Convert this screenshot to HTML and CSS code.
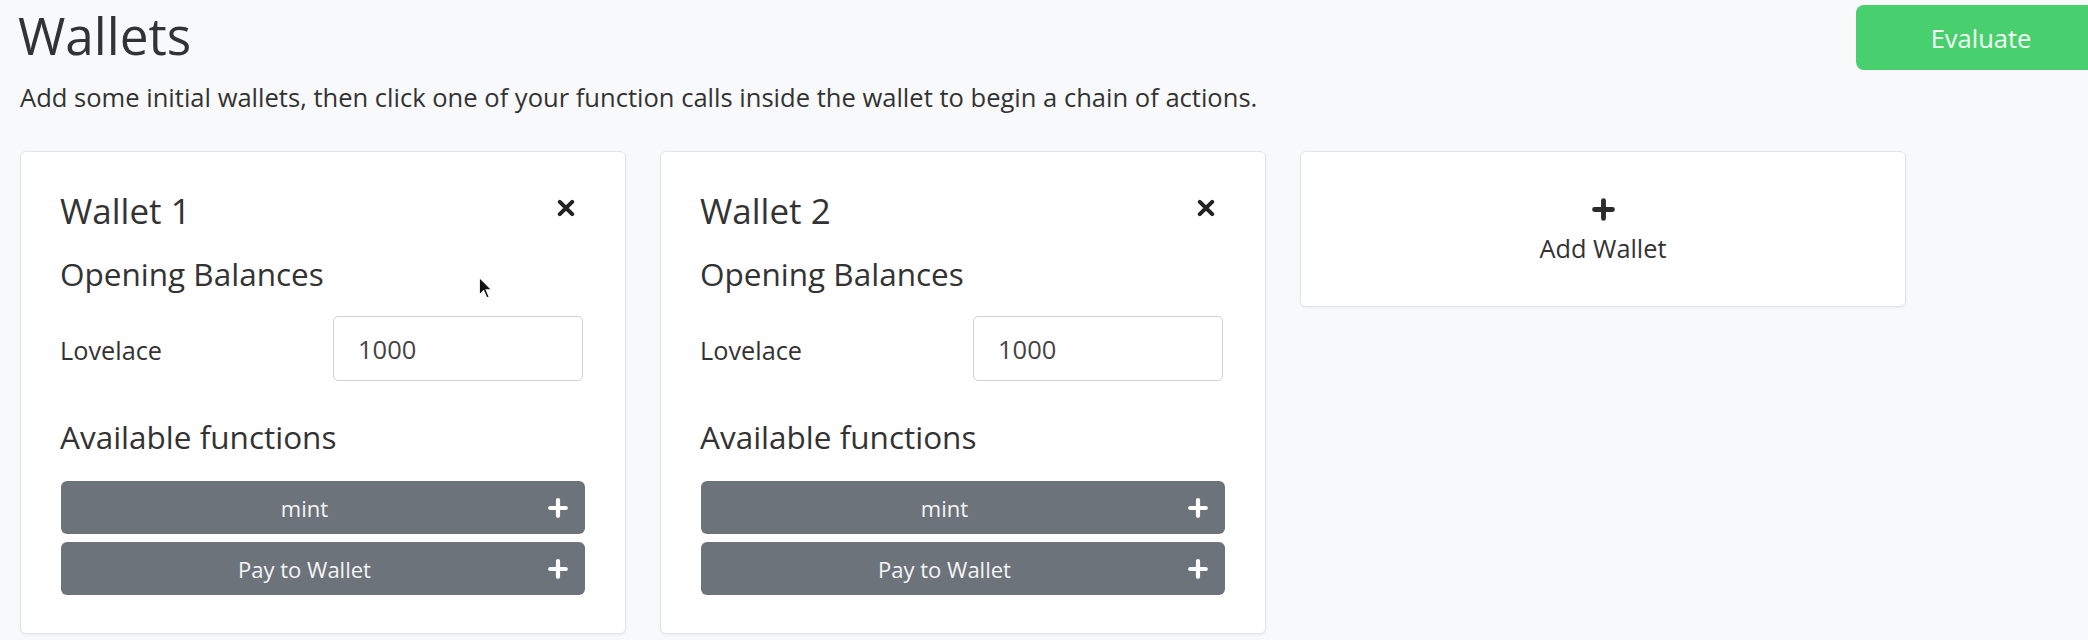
FILE: index.html
```html
<!DOCTYPE html>
<html lang="en">
<head>
<meta charset="utf-8">
<title>Wallets</title>
<link rel="stylesheet" href="styles.css">
</head>
<body>
<div class="page">
  <header class="header">
    <div class="intro">
      <h1 class="title">Wallets</h1>
      <p class="subtitle">Add some initial wallets, then click one of your function calls inside the wallet to begin a chain of actions.</p>
    </div>
    <button class="evaluate">Evaluate</button>
  </header>

  <div class="wallets">
    <section class="card wallet">
      <div class="wallet-head">
        <h2 class="wallet-name">Wallet 1</h2>
        <svg class="close" viewBox="0 0 16 16" width="18" height="18"><path d="M2.5 2.5 L13.5 13.5 M13.5 2.5 L2.5 13.5" stroke="#222" stroke-width="3.6" stroke-linecap="round"/></svg>
      </div>
      <h3 class="section-title">Opening Balances</h3>
      <div class="balance-row">
        <span class="balance-label">Lovelace</span>
        <input class="balance-input" type="text" value="1000">
      </div>
      <h3 class="section-title functions-title">Available functions</h3>
      <div class="functions">
        <button class="fn-btn"><span class="fn-label">mint</span><svg class="fn-plus" viewBox="0 0 18 18" width="20" height="20"><path d="M9 2 V16 M2 9 H16" stroke="#fff" stroke-width="3.8" stroke-linecap="round"/></svg></button>
        <button class="fn-btn"><span class="fn-label">Pay to Wallet</span><svg class="fn-plus" viewBox="0 0 18 18" width="20" height="20"><path d="M9 2 V16 M2 9 H16" stroke="#fff" stroke-width="3.8" stroke-linecap="round"/></svg></button>
      </div>
    </section>

    <section class="card wallet">
      <div class="wallet-head">
        <h2 class="wallet-name">Wallet 2</h2>
        <svg class="close" viewBox="0 0 16 16" width="18" height="18"><path d="M2.5 2.5 L13.5 13.5 M13.5 2.5 L2.5 13.5" stroke="#222" stroke-width="3.6" stroke-linecap="round"/></svg>
      </div>
      <h3 class="section-title">Opening Balances</h3>
      <div class="balance-row">
        <span class="balance-label">Lovelace</span>
        <input class="balance-input" type="text" value="1000">
      </div>
      <h3 class="section-title functions-title">Available functions</h3>
      <div class="functions">
        <button class="fn-btn"><span class="fn-label">mint</span><svg class="fn-plus" viewBox="0 0 18 18" width="20" height="20"><path d="M9 2 V16 M2 9 H16" stroke="#fff" stroke-width="3.8" stroke-linecap="round"/></svg></button>
        <button class="fn-btn"><span class="fn-label">Pay to Wallet</span><svg class="fn-plus" viewBox="0 0 18 18" width="20" height="20"><path d="M9 2 V16 M2 9 H16" stroke="#fff" stroke-width="3.8" stroke-linecap="round"/></svg></button>
      </div>
    </section>

    <section class="card add-wallet">
      <svg class="add-plus" viewBox="0 0 18 18" width="23" height="23"><path d="M9 2 V16 M2 9 H16" stroke="#2b2b2b" stroke-width="3.8" stroke-linecap="round"/></svg>
      <span class="add-label">Add Wallet</span>
    </section>
  </div>

  <svg class="cursor" viewBox="0 0 12 19" width="15" height="24"><path d="M1 1 L1 15 L4.5 11.8 L7 17.5 L9 16.6 L6.6 11 L11 11 Z" fill="#111" stroke="#fff" stroke-width="1"/></svg>
</div>
</body>
</html>
```

FILE: styles.css
```css
* { box-sizing: border-box; }

html, body {
  margin: 0;
  padding: 0;
  background: #f8f9fa;
  overflow: hidden;
}

body {
  font-family: "Open Sans", "Noto Sans", sans-serif;
  color: #333;
  width: 2088px;
  height: 640px;
}

.page {
  position: relative;
  padding: 0 0 0 20px;
}

.header {
  display: flex;
  justify-content: space-between;
  align-items: flex-start;
}

.title {
  margin: 4px 0 0 -2px;
  font-size: 51.3px;
  font-weight: 400;
  line-height: 62px;
  color: #333;
}

.subtitle {
  margin: 15px 0 0 0;
  font-size: 25.55px;
  line-height: 32px;
  color: #333;
}

.evaluate {
  margin: 5px -18px 0 0;
  width: 250px;
  height: 65px;
  border: none;
  border-radius: 8px;
  background: #48d06f;
  color: #f2fff4;
  font-family: "Open Sans", "Noto Sans", sans-serif;
  font-size: 25.5px;
  padding: 0;
}

.wallets {
  display: grid;
  grid-template-columns: repeat(3, 606px);
  column-gap: 34px;
  align-items: start;
  margin-top: 38px;
}

.card {
  background: #fff;
  border: 1px solid #e4e5e7;
  border-radius: 6px;
  box-shadow: 0 1px 3px rgba(0, 0, 0, 0.06);
}

.wallet {
  padding: 40px 40px 38px 40px;
  height: 483px;
}

.wallet-head {
  display: flex;
  justify-content: space-between;
  align-items: center;
}

.wallet-name {
  margin: 0 0 0 -1px;
  font-size: 35px;
  font-weight: 400;
  line-height: 38px;
}

.close {
  margin-right: 10px;
  margin-top: -6px;
}

.section-title {
  margin: 25px 0 0 -1px;
  font-size: 31.5px;
  font-weight: 400;
  line-height: 38px;
}

.balance-row {
  display: flex;
  justify-content: space-between;
  align-items: center;
  margin-top: 23px;
}

.balance-label {
  font-size: 25.3px;
  line-height: 32px;
  margin-top: 2px;
  margin-left: -1px;
}

.balance-input {
  width: 250px;
  height: 65px;
  border: 1px solid #cfd1d4;
  border-radius: 5px;
  padding: 0 24px;
  font-family: "Open Sans", "Noto Sans", sans-serif;
  font-size: 25.5px;
  color: #444;
  background: #fff;
  margin-right: 2px;
}

.functions-title {
  margin-top: 37px;
}

.functions {
  display: flex;
  flex-direction: column;
  gap: 8px;
  margin-top: 25px;
}

.fn-btn {
  display: flex;
  align-items: center;
  width: 100%;
  height: 53px;
  border: none;
  border-radius: 6px;
  background: #6c737a;
  color: #f4f4f4;
  font-family: "Open Sans", "Noto Sans", sans-serif;
  font-size: 22px;
  padding: 0 17px 0 0;
}

.fn-label {
  flex: 1;
  text-align: center;
}

.fn-plus {
  flex: none;
  display: block;
}

.add-wallet {
  height: 156px;
  display: flex;
  flex-direction: column;
  align-items: center;
  padding-top: 46px;
}

.add-plus {
  display: block;
}

.add-label {
  font-size: 25.3px;
  line-height: 32px;
  margin-top: 11px;
}

.cursor {
  position: absolute;
  left: 478px;
  top: 276px;
}
```
